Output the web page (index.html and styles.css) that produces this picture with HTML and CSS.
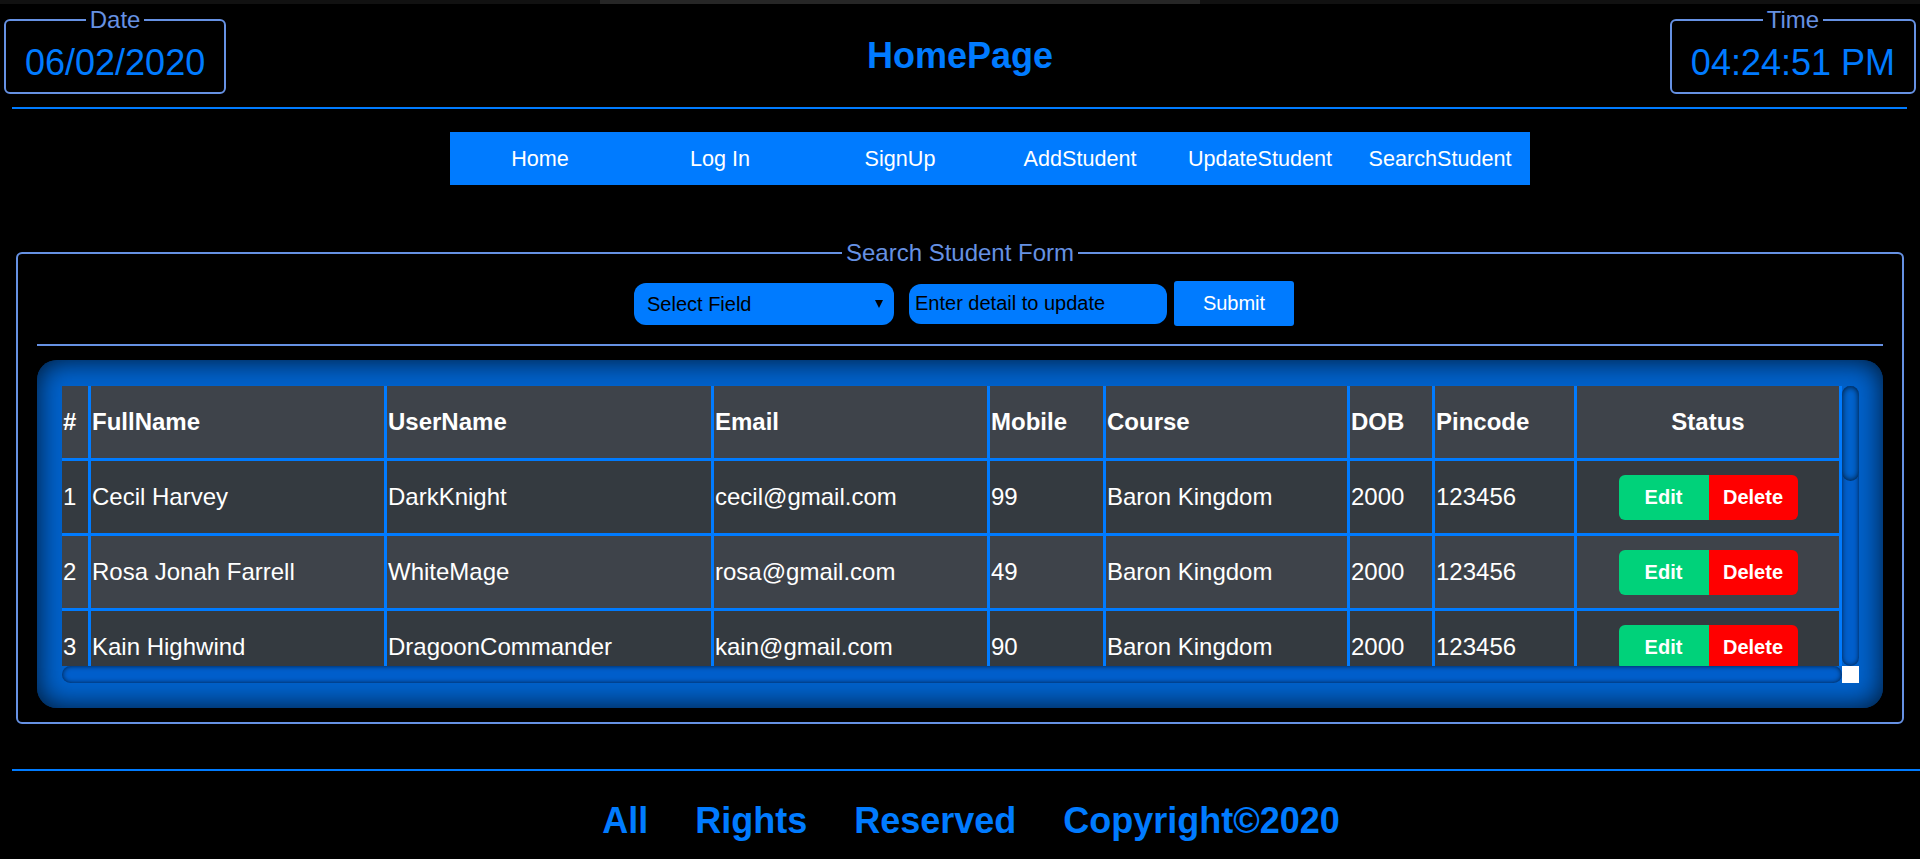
FILE: index.html
```html
<!DOCTYPE html>
<html lang="en">
<head>
    <meta charset="UTF-8">
    <meta name="viewport" content="width=device-width, initial-scale=1.0">
    <title>HomePage</title>
    <link rel="stylesheet" href="styles.css">
</head>
<body>

    <div class="top-strip"><span></span></div>

    <header class="top-bar">
        <fieldset class="clock clock-date">
            <legend>Date</legend>
            <span>06/02/2020</span>
        </fieldset>
        <h1 class="title">HomePage</h1>
        <fieldset class="clock clock-time">
            <legend>Time</legend>
            <span>04:24:51 PM</span>
        </fieldset>
    </header>

    <hr class="rule">

    <div class="nav-wrap">
        <nav class="nav">
            <a href="#">Home</a>
            <a href="#">Log In</a>
            <a href="#">SignUp</a>
            <a href="#">AddStudent</a>
            <a href="#">UpdateStudent</a>
            <a href="#">SearchStudent</a>
        </nav>
    </div>

    <fieldset class="search">
        <legend>Search Student Form</legend>

        <form class="search-row" action="#" method="GET">
            <span class="field-select">
                <select name="field">
                    <option value="">Select Field</option>
                    <option value="fullname">FullName</option>
                    <option value="username">UserName</option>
                    <option value="email">Email</option>
                    <option value="mobile">Mobile</option>
                    <option value="course">Course</option>
                </select>
            </span>
            <input class="field-input" type="text" name="detail" placeholder="Enter detail to update">
            <button class="btn-submit" type="submit">Submit</button>
        </form>

        <hr class="search-rule">

        <div class="table-frame">
            <div class="table-scroll">
                <div class="table-view">
                    <table class="students">
                        <colgroup>
                            <col class="c-num">
                            <col class="c-full">
                            <col class="c-user">
                            <col class="c-mail">
                            <col class="c-mob">
                            <col class="c-course">
                            <col class="c-dob">
                            <col class="c-pin">
                            <col class="c-status">
                        </colgroup>
                        <thead>
                            <tr>
                                <th>#</th>
                                <th>FullName</th>
                                <th>UserName</th>
                                <th>Email</th>
                                <th>Mobile</th>
                                <th>Course</th>
                                <th>DOB</th>
                                <th>Pincode</th>
                                <th class="status">Status</th>
                            </tr>
                        </thead>
                        <tbody>
                            <tr>
                                <td>1</td><td>Cecil Harvey</td><td>DarkKnight</td><td>cecil@gmail.com</td><td>99</td><td>Baron Kingdom</td><td>2000</td><td>123456</td>
                                <td class="status"><div class="btn-group"><button class="btn-edit">Edit</button><button class="btn-delete">Delete</button></div></td>
                            </tr>
                            <tr>
                                <td>2</td><td>Rosa Jonah Farrell</td><td>WhiteMage</td><td>rosa@gmail.com</td><td>49</td><td>Baron Kingdom</td><td>2000</td><td>123456</td>
                                <td class="status"><div class="btn-group"><button class="btn-edit">Edit</button><button class="btn-delete">Delete</button></div></td>
                            </tr>
                            <tr>
                                <td>3</td><td>Kain Highwind</td><td>DragoonCommander</td><td>kain@gmail.com</td><td>90</td><td>Baron Kingdom</td><td>2000</td><td>123456</td>
                                <td class="status"><div class="btn-group"><button class="btn-edit">Edit</button><button class="btn-delete">Delete</button></div></td>
                            </tr>
                        </tbody>
                    </table>
                </div>
                <div class="vbar"><div class="vbar-thumb"></div></div>
                <div class="hbar"></div>
                <div class="corner"></div>
            </div>
        </div>
    </fieldset>

    <hr class="footer-rule">
    <p class="footer-text">
        <span>All</span>
        <span>Rights</span>
        <span>Reserved</span>
        <span>Copyright©2020</span>
    </p>

</body>
</html>
```

FILE: styles.css
```css
/* Page basics */
* {
    box-sizing: border-box;
}

html {
    overflow: hidden;
}

body {
    margin: 0;
    background-color: #000;
    font-family: 'Liberation Sans', Arial, sans-serif;
}

/* thin strip along the very top */
.top-strip {
    height: 4px;
    padding-left: 600px;
    background-color: #111;
}

.top-strip span {
    display: block;
    width: 600px;
    height: 100%;
    background-color: #262626;
}

/* Header: date, title, time */
.top-bar {
    display: grid;
    grid-template-columns: 1fr auto 1fr;
    align-items: center;
    padding: 2px 4px 0;
}

.clock {
    margin: 0;
    padding: 8px 19px 8px;
    border: 2px solid #6691e3;
    border-radius: 6px;
    color: #007bff;
    font-size: 36px;
    line-height: normal;
}

.clock legend,
.search legend {
    margin: 0 auto;
    padding: 0 4px;
    color: #6691e3;
    font-size: 24px;
    line-height: normal;
}

.clock-date {
    justify-self: start;
}

.clock-time {
    justify-self: end;
}

.title {
    margin: 11px 0 0;
    color: #007bff;
    font-size: 36px;
    font-weight: bold;
}

.rule {
    height: 2px;
    margin: 13px 13px 0 12px;
    border: 0;
    background-color: #007bff;
}

/* Navigation */
.nav-wrap {
    display: flex;
    justify-content: center;
    margin-top: 23px;
    padding-left: 60px;
}

.nav {
    display: flex;
    background-color: #007bff;
}

.nav a {
    display: flex;
    align-items: center;
    justify-content: center;
    width: 180px;
    height: 53px;
    color: #fff;
    font-size: 21.6px;
    text-decoration: none;
}

/* Search form */
.search {
    min-width: 0;
    margin: 54px 16px 0;
    padding: 14px 19px 14px;
    border: 2px solid #6691e3;
    border-radius: 6px;
}

.search-row {
    display: flex;
    justify-content: center;
    align-items: center;
    padding-left: 8px;
}

.field-select {
    position: relative;
    width: 260px;
    height: 42px;
}

.field-select select {
    appearance: none;
    width: 100%;
    height: 100%;
    padding: 0 13px;
    border: 0;
    border-radius: 12px;
    background-color: #007bff;
    color: #000;
    font-family: inherit;
    font-size: 20px;
}

/* dropdown arrow */
.field-select::after {
    content: "";
    position: absolute;
    right: 11px;
    top: 17px;
    border-left: 4px solid transparent;
    border-right: 4px solid transparent;
    border-top: 8px solid #000;
    pointer-events: none;
}

.field-input {
    width: 258px;
    height: 40px;
    margin-left: 15px;
    padding: 0 6px;
    border: 0;
    border-radius: 12px;
    background-color: #007bff;
    color: #000;
    font-family: inherit;
    font-size: 20px;
}

.field-input::placeholder {
    color: #000;
}

.btn-submit {
    width: 120px;
    height: 45px;
    margin-left: 7px;
    border: 0;
    border-radius: 3px;
    background-color: #007bff;
    color: #fff;
    font-family: inherit;
    font-size: 20px;
}

.search-rule {
    height: 2px;
    margin: 18px 0 0;
    border: 0;
    background-color: #6691e3;
}

/* Table frame with the dark blue glow */
.table-frame {
    margin-top: 14px;
    padding: 26px 24px 25px 25px;
    border-radius: 20px;
    background-color: #0062cc;
    box-shadow: inset 0 0 28px rgba(0, 0, 0, 0.8);
}

/* table area plus its scroll bars */
.table-scroll {
    display: grid;
    grid-template-columns: 1780px 17px;
    grid-template-rows: 280px 17px;
}

.table-view {
    overflow: hidden;
}

.vbar,
.hbar {
    border-radius: 9px;
    background-color: #005ecb;
    box-shadow: inset 0 0 5px rgba(0, 0, 0, 0.7);
}

.vbar-thumb {
    height: 95px;
    border-radius: 9px;
    background-color: #0062cc;
    box-shadow: inset 0 0 6px rgba(0, 0, 0, 0.85);
}

.corner {
    background-color: #fff;
}

.students {
    width: 1780px;
    table-layout: fixed;
    border-collapse: separate;
    border-spacing: 0;
    color: #fff;
    font-size: 24px;
}

.c-num { width: 29px; }
.c-full { width: 296px; }
.c-user { width: 327px; }
.c-mail { width: 276px; }
.c-mob { width: 116px; }
.c-course { width: 244px; }
.c-dob { width: 85px; }
.c-pin { width: 142px; }
.c-status { width: 265px; }

.students th,
.students td {
    height: 75px;
    padding: 0 1px;
    border-right: 3px solid #007bff;
    border-bottom: 3px solid #007bff;
    text-align: left;
    vertical-align: middle;
    white-space: nowrap;
}

.students thead tr {
    background-color: #3e434a;
}

.students tbody tr:nth-child(odd) {
    background-color: #343a40;
}

.students tbody tr:nth-child(even) {
    background-color: #3e434a;
}

.students .status {
    text-align: center;
}

.btn-group {
    display: flex;
    justify-content: center;
}

.btn-edit,
.btn-delete {
    height: 45px;
    border: 0;
    color: #fff;
    font-family: inherit;
    font-size: 20px;
    font-weight: bold;
}

.btn-edit {
    width: 90px;
    border-radius: 6px 0 0 6px;
    background-color: #00d27a;
}

.btn-delete {
    width: 89px;
    border-radius: 0 6px 6px 0;
    background-color: #f00;
}

/* Footer */
.footer-rule {
    height: 2px;
    margin: 45px 0 0 12px;
    border: 0;
    background-color: #007bff;
}

.footer-text {
    display: flex;
    justify-content: center;
    gap: 47px;
    margin: 29px 0 0;
    padding-left: 22px;
    color: #007bff;
    font-size: 36px;
    font-weight: bold;
}
```
